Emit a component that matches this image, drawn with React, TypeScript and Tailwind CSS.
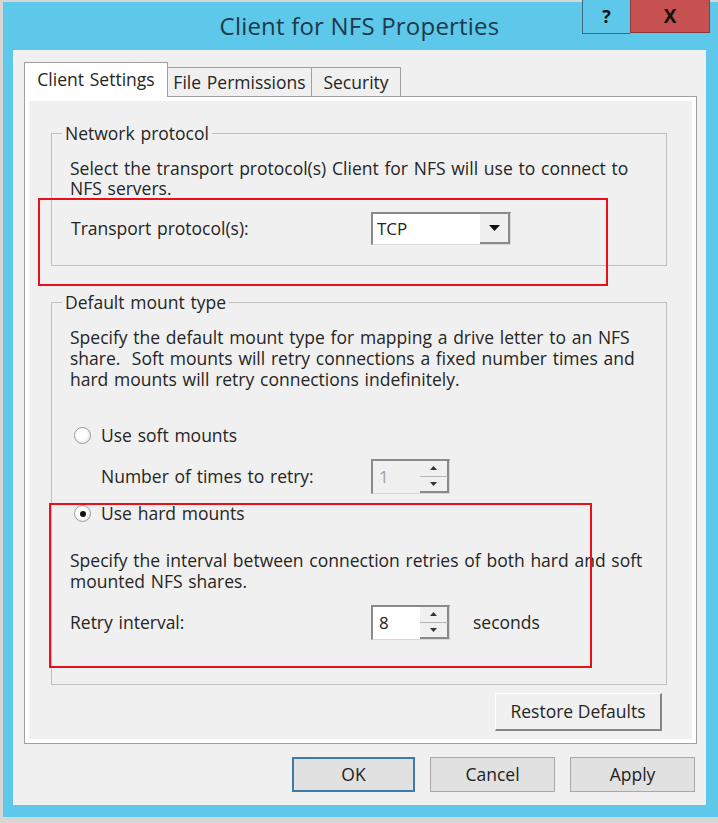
const Radio = ({ checked }: { checked?: boolean }) => (
    <span className="w-[17px] h-[17px] rounded-full border border-[#9b9b9b] bg-[radial-gradient(circle_at_40%_40%,#ffffff_40%,#dcdcdc)] flex items-center justify-center">
        {checked && <span className="w-[6px] h-[6px] rounded-full bg-[#111]" />}
    </span>
)

const Arrow = ({ up }: { up?: boolean }) => (
    <svg width="7" height="4" viewBox="0 0 7 4">
        <path d={up ? "M0 4 L3.5 0 L7 4 Z" : "M0 0 L3.5 4 L7 0 Z"} fill="#333" />
    </svg>
)

const Spinner = ({ value, disabled }: { value: string; disabled?: boolean }) => (
    <div className="w-[79px] h-[35px] flex border-t-2 border-l-2 border-[#8a8a8a] border-r border-b border-r-[#d8d8d8] border-b-[#d8d8d8]">
        <div className={`flex-1 flex items-center pl-[6px] text-[17px] ${disabled ? "bg-[#f0f0f0] text-[#a0a0a0]" : "bg-white text-[#222]"}`}>{value}</div>
        <div className="w-[29px] flex flex-col bg-[#f0f0f0]">
            <div className="flex-1 flex items-center justify-center border-b border-[#b5b5b5] border-r-2 border-r-[#8a8a8a]">
                <Arrow up />
            </div>
            <div className="flex-1 flex items-center justify-center border-b-2 border-[#8a8a8a] border-r-2 border-r-[#8a8a8a]">
                <Arrow />
            </div>
        </div>
    </div>
)

const Button = ({ label, primary, className }: { label: string; primary?: boolean; className?: string }) => (
    <button type="button" className={`h-[35px] flex items-center justify-center bg-[#e1e1e1] text-[17.5px] text-[#222] ${primary ? "border-2 border-[#3d7bad]" : "border border-[#a8a8a8]"} ${className ?? ""}`}>
        {label}
    </button>
)

export default function App() {
    return (
        <main className="relative w-[718px] h-[823px] bg-[#d6d6d6] pt-[2px] pl-[3px] font-['Open_Sans',sans-serif] text-[#252525] [word-spacing:1.2px] overflow-hidden">
            {/* window frame */}
            <div className="w-[715px] h-[815px] bg-[#5ec8ea] flex flex-col">
                {/* title bar */}
                <header className="relative h-[48px] flex items-center justify-center">
                    <h1 className="text-[24px] text-[#1d3a48] tracking-[0.2px] [word-spacing:0px] pr-[2px]">Client for NFS Properties</h1>
                    <div className="absolute top-[-2px] right-[8px] flex">
                        <span className="w-[48px] h-[34px] flex items-center justify-center border-l border-b border-[#3a6a80] bg-[#5ec8ea] text-[18px] font-bold text-[#111]">?</span>
                        <span className="w-[80px] h-[33px] flex items-center justify-center border border-t-0 border-[#8a3a3a] bg-[#c75050] text-[19px] font-bold text-[#111]">X</span>
                    </div>
                </header>

                {/* client area */}
                <section className="ml-[10px] w-[693px] h-[755px] bg-[#f0f0f0] pt-[12px] pl-[11px] pr-[9px] pb-[13px] flex flex-col">
                    {/* tabs */}
                    <nav className="flex items-end relative z-10 -mb-px text-[17.5px]">
                        <div className="w-[144px] h-[35px] bg-white border border-b-0 border-[#a0a0a0] flex items-center justify-center pb-[2px]">Client Settings</div>
                        <div className="w-[144px] h-[30px] bg-[#f0f0f0] border border-l-0 border-[#a0a0a0] flex items-center justify-center">File Permissions</div>
                        <div className="w-[89px] h-[30px] bg-[#f0f0f0] border border-l-0 border-[#a0a0a0] flex items-center justify-center">Security</div>
                    </nav>

                    {/* tab panel */}
                    <div className="w-[673px] h-[648px] border border-[#a0a0a0]">
                        <div className="h-full border-4 border-white bg-[#f0f0f0] pt-[22px] pl-[22px] flex flex-col text-[17.5px]">
                            <fieldset className="w-[616px] border border-[#c0c0c0] px-[18px] pb-[20px]">
                                <legend className="-ml-[8px] px-[3px] leading-[21px]">Network protocol</legend>
                                <p className="mt-[14px] leading-[20px] whitespace-nowrap">Select the transport protocol(s) Client for NFS will use to connect to<br />NFS servers.</p>
                                <div className="mt-[14px] flex items-center">
                                    <span className="w-[301px] pl-px">Transport protocol(s):</span>
                                    <div className="w-[140px] h-[33px] flex border-t-2 border-l-2 border-[#8a8a8a] border-r border-b border-r-[#d8d8d8] border-b-[#d8d8d8]">
                                        <div className="flex-1 bg-white flex items-center pl-[4px] text-[17px]">TCP</div>
                                        <div className="w-[30px] bg-[#f0f0f0] border-r-2 border-b-2 border-[#8a8a8a] flex items-center justify-center">
                                            <svg width="11" height="6" viewBox="0 0 11 6"><path d="M0 0 L5.5 6 L11 0 Z" fill="#111" /></svg>
                                        </div>
                                    </div>
                                </div>
                            </fieldset>

                            <fieldset className="mt-[26px] w-[616px] border border-[#c0c0c0] px-[18px] pb-[44px]">
                                <legend className="-ml-[8px] px-[3px] leading-[21px]">Default mount type</legend>
                                <p className="mt-[14px] leading-[21px] whitespace-nowrap">Specify the default mount type for mapping a drive letter to an NFS<br />share.&nbsp; Soft mounts will retry connections a fixed number times and<br />hard mounts will retry connections indefinitely.</p>
                                <label className="mt-[35px] flex items-center gap-[10px] pl-[4px] leading-[21px]">
                                    <Radio />
                                    <span>Use soft mounts</span>
                                </label>
                                <div className="mt-[13px] flex items-center">
                                    <span className="w-[301px] pl-[31px]">Number of times to retry:</span>
                                    <Spinner value="1" disabled />
                                </div>
                                <label className="mt-[9px] flex items-center gap-[10px] pl-[4px] leading-[21px]">
                                    <Radio checked />
                                    <span>Use hard mounts</span>
                                </label>
                                <p className="mt-[26px] leading-[21px] whitespace-nowrap">Specify the interval between connection retries of both hard and soft<br />mounted NFS shares.</p>
                                <div className="mt-[13px] flex items-center">
                                    <span className="w-[301px]">Retry interval:</span>
                                    <Spinner value="8" />
                                    <span className="ml-[23px]">seconds</span>
                                </div>
                            </fieldset>

                            <div className="mt-[8px] w-[611px] flex justify-end">
                                <button type="button" className="w-[167px] h-[38px] bg-[#f0f0f0] border border-t-white border-l-white border-r-2 border-b-2 border-r-[#858585] border-b-[#858585]">Restore Defaults</button>
                            </div>
                        </div>
                    </div>

                    {/* dialog buttons */}
                    <div className="mt-[13px] flex justify-end gap-[15px] pr-[2px]">
                        <Button label="OK" primary className="w-[123px]" />
                        <Button label="Cancel" className="w-[125px]" />
                        <Button label="Apply" className="w-[125px]" />
                    </div>
                </section>
            </div>

            {/* red annotation boxes */}
            <div className="absolute left-[38px] top-[198px] w-[570px] h-[88px] border-2 border-[#e8101a] pointer-events-none" />
            <div className="absolute left-[49px] top-[503px] w-[543px] h-[165px] border-2 border-[#e8101a] pointer-events-none" />
        </main>
    )
}
